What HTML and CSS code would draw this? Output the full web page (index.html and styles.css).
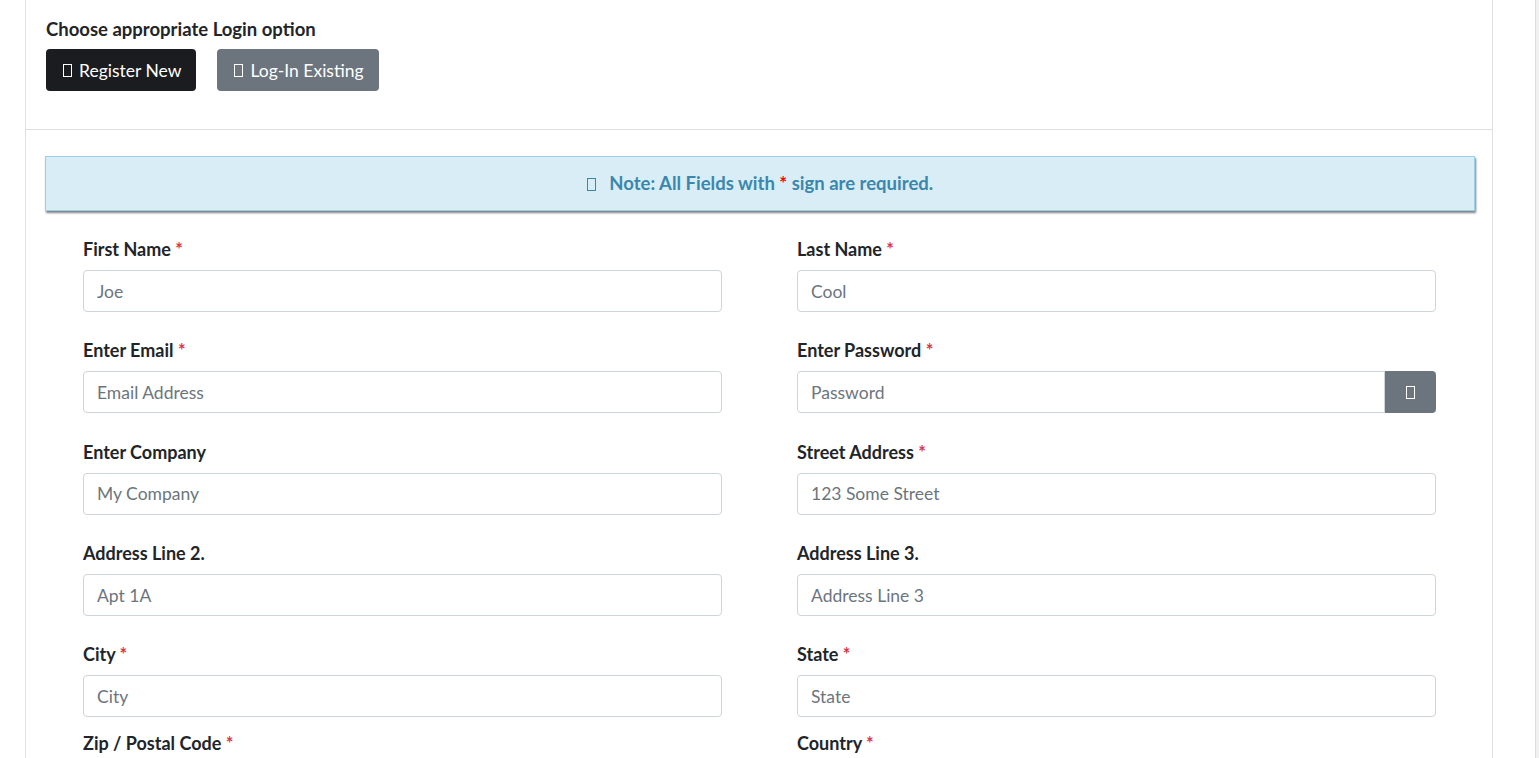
FILE: index.html
```html
<!DOCTYPE html>
<html lang="en">
<head>
  <meta charset="UTF-8">
  <meta name="viewport" content="width=device-width, initial-scale=1.0">
  <title>Register</title>
  <link rel="stylesheet" href="styles.css">
</head>
<body>
  <!-- 登录卡片 -->
  <div class="wrap">
    <div class="card">
      <!-- 头部：登录方式 -->
      <div class="card-head">
        <h5 class="title">Choose appropriate Login option</h5>
        <div class="opts">
          <a href="javascript:;" class="btn btn-dark"><i class="ico"></i> Register New</a>
          <a href="javascript:;" class="btn btn-grey"><i class="ico"></i> Log-In Existing</a>
        </div>
      </div>
      <!-- 表单 -->
      <div class="card-body">
        <div class="note"><i class="ico ico-note"></i> Note: All Fields with <span class="req">*</span> sign are required.</div>
        <form class="form">
          <div class="field">
            <label>First Name <span class="star">*</span></label>
            <input type="text" placeholder="Joe">
          </div>
          <div class="field">
            <label>Last Name <span class="star">*</span></label>
            <input type="text" placeholder="Cool">
          </div>
          <div class="field">
            <label>Enter Email <span class="star">*</span></label>
            <input type="text" placeholder="Email Address">
          </div>
          <div class="field">
            <label>Enter Password <span class="star">*</span></label>
            <div class="group">
              <input type="password" placeholder="Password">
              <a href="javascript:;" class="eye"><i class="ico"></i></a>
            </div>
          </div>
          <div class="field">
            <label>Enter Company</label>
            <input type="text" placeholder="My Company">
          </div>
          <div class="field">
            <label>Street Address <span class="star">*</span></label>
            <input type="text" placeholder="123 Some Street">
          </div>
          <div class="field">
            <label>Address Line 2.</label>
            <input type="text" placeholder="Apt 1A">
          </div>
          <div class="field">
            <label>Address Line 3.</label>
            <input type="text" placeholder="Address Line 3">
          </div>
          <div class="field short">
            <label>City <span class="star">*</span></label>
            <input type="text" placeholder="City">
          </div>
          <div class="field short">
            <label>State <span class="star">*</span></label>
            <input type="text" placeholder="State">
          </div>
          <div class="field">
            <label>Zip / Postal Code <span class="star">*</span></label>
            <input type="text" placeholder="Zip">
          </div>
          <div class="field">
            <label>Country <span class="star">*</span></label>
            <input type="text" placeholder="Country">
          </div>
        </form>
      </div>
    </div>
  </div>
  <div class="scroll"></div>
</body>
</html>
```

FILE: styles.css
```css
/* 清除默认样式 */
* {
  margin: 0;
  padding: 0;
  box-sizing: border-box;
}
body {
  font-family: Lato, "Open Sans", sans-serif;
  color: #212529;
  background-color: #fff;
  overflow: hidden;
}
.wrap {
  padding-left: 25px;
  width: 1493px;
}
.card {
  border: 1px solid #dfdfdf;
  border-top: 0;
}
/* 头部 */
.card-head {
  padding: 18px 20px 38px;
  border-bottom: 1px solid #dfdfdf;
}
.card-head .title {
  font-size: 18.5px;
  line-height: 22px;
  font-weight: 700;
  margin-bottom: 9px;
}
.opts {
  display: flex;
  gap: 21px;
}
.btn {
  display: inline-flex;
  align-items: center;
  gap: 7px;
  height: 42px;
  padding: 0 15px 0 17px;
  border-radius: 4px;
  font-size: 17.5px;
  color: #fff;
  text-decoration: none;
}
.btn-dark {
  background-color: #1b1c1f;
}
.btn-grey {
  background-color: #6c757d;
}
/* 缺字方框 */
.ico {
  display: inline-block;
  width: 9px;
  height: 13px;
  border: 1px solid currentColor;
}
/* 表单部分 */
.card-body {
  padding: 26px 17px 0 19px;
}
.note {
  height: 55px;
  line-height: 53px;
  text-align: center;
  background-color: #d9edf7;
  border: 1px solid #9acfea;
  box-shadow: 1px 2px 2px rgba(0,0,0,0.5);
  color: #3a87ad;
  font-size: 18.5px;
  font-weight: 700;
}
.note .ico-note {
  vertical-align: -1px;
  margin-right: 9px;
}
.note .req {
  color: #f00;
}
.form {
  display: grid;
  grid-template-columns: 639px 639px;
  column-gap: 75px;
  padding: 26px 38px 0;
}
.field {
  margin-bottom: 26.35px;
}
.field.short {
  margin-bottom: 13.5px;
}
.field label {
  display: block;
  font-size: 18px;
  line-height: 24px;
  font-weight: 700;
  margin-bottom: 9px;
}
.field .star {
  color: #dc3545;
}
.field input {
  display: block;
  width: 100%;
  height: 42px;
  padding: 0 13px;
  border: 1px solid #ced4da;
  border-radius: 4px;
  font: 17.5px Lato, "Open Sans", sans-serif;
  color: #495057;
  outline: none;
}
.field input::placeholder {
  color: #6c757d;
}
.group {
  display: flex;
}
.group input {
  border-radius: 4px 0 0 4px;
}
.group .eye {
  display: flex;
  align-items: center;
  justify-content: center;
  flex: 0 0 51px;
  height: 42px;
  background-color: #6c757d;
  border-radius: 0 4px 4px 0;
  color: #fff;
}
/* 右侧滚动条 */
.scroll {
  position: fixed;
  top: 0;
  right: 0;
  width: 4px;
  height: 100%;
  background-color: #f1f1f1;
  border-left: 1px solid #dcdcdc;
}
```
